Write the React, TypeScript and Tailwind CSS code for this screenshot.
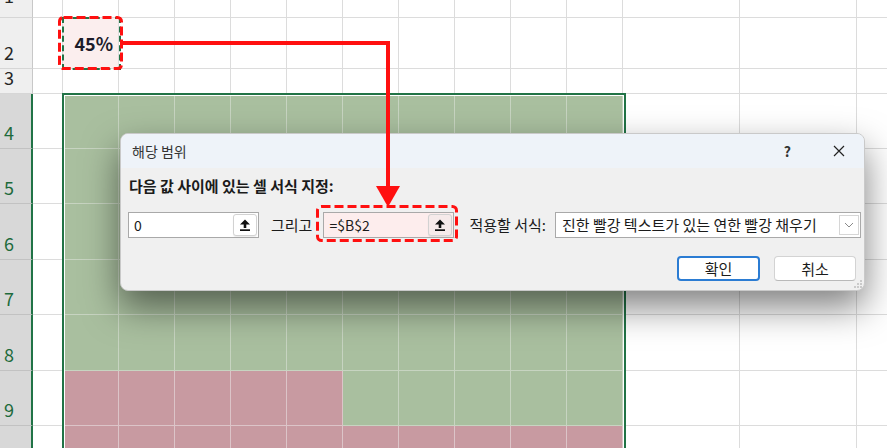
import React from 'react';

// 엑셀 시트 + "해당 범위" 조건부 서식 대화상자

const ROW_COUNT = 10;
const COL_COUNT = 15;

function cellClass(r: number, c: number) {
  if (c === 0) {
    return r >= 3
      ? 'bg-[#d8d8d8] border-r-2 border-r-[#217346] border-b border-b-[#c2c2c2] text-[#1e6b3c]'
      : 'bg-[#efefef] border-r border-r-[#c8c8c8] border-b border-b-[#d6d6d6] text-[#262626]';
  }
  const inRange = r >= 3 && c >= 2 && c <= 11;
  if (inRange) {
    const pink = r === 9 || (r === 8 && c <= 6);
    return pink
      ? 'bg-[#c89aa1] border-r border-b border-[#dcc4c8]'
      : 'bg-[#a9bf9f] border-r border-b border-[#c7d4c1]';
  }
  if (r === 1 && c === 2) return 'bg-[#fbeeee] border-r border-b border-[#dcdcdc]';
  return 'bg-white border-r border-b border-[#dcdcdc]';
}

function UploadIcon() {
  return (
    <svg width="14" height="14" viewBox="0 0 14 14">
      <polygon points="7,1.5 12,6.5 8.3,6.5 8.3,10 5.7,10 5.7,6.5 2,6.5" fill="#111" />
      <rect x="2" y="11.3" width="10" height="1.7" fill="#111" />
    </svg>
  );
}

// 빨간 점선 강조 박스
function DashedBox({ className, w, h }: { className: string; w: number; h: number }) {
  return (
    <svg className={`absolute ${className}`} width={w} height={h} viewBox={`0 0 ${w} ${h}`}>
      <rect
        x="1.5"
        y="1.5"
        width={w - 3}
        height={h - 3}
        rx="4"
        fill="none"
        stroke="#ff1010"
        strokeWidth="3"
        strokeDasharray="9 4"
      />
    </svg>
  );
}

function RefInput({ value, pink }: { value: string; pink?: boolean }) {
  return (
    <div
      className={`relative shrink-0 w-[131px] h-[26px] border border-[#a9a9a9] flex items-center pl-[5px] text-[14px] text-[#1b1b1b] ${
        pink ? 'bg-[#fdeded]' : 'bg-white'
      }`}
    >
      <span>{value}</span>
      <div
        className={`absolute right-[1px] top-[1px] w-[24px] h-[22px] rounded-[3px] border border-[#d2d2d2] flex items-center justify-center shadow-[0_1px_1px_rgba(0,0,0,0.08)] ${
          pink ? 'bg-[#f6eaea]' : 'bg-white'
        }`}
      >
        <UploadIcon />
      </div>
    </div>
  );
}

export default function App() {
  const cells = [];
  for (let r = 0; r < ROW_COUNT; r++) {
    for (let c = 0; c < COL_COUNT; c++) {
      const header = c === 0;
      cells.push(
        <div
          key={`${r}-${c}`}
          className={`${cellClass(r, c)} ${
            header
              ? `flex items-end pl-[4px] text-[18px] leading-none ${r === 0 ? 'pb-[13px] overflow-hidden' : 'pb-[7px]'}`
              : 'overflow-hidden'
          }`}
        >
          {header && r < 9 && r + 1}
          {r === 1 && c === 2 && (
            <div className="h-full flex items-center justify-end pr-[5px] text-[18px] font-bold text-[#1c1c2a]">
              45%
            </div>
          )}
        </div>
      );
    }
  }

  return (
    <div className="relative w-[887px] h-[448px] overflow-hidden bg-white font-['Noto_Sans_CJK_KR','Noto_Sans',sans-serif]">
      {/* Sheet */}
      <div className="grid grid-cols-[33px_30px_repeat(10,56px)_117px_117px_60px] grid-rows-[18px_51px_25px_55px_55px_56px_55px_56px_55px_55px]">
        {cells}
      </div>

      {/* B2 copy border */}
      <div className="absolute left-[62px] top-[17px] w-[59px] h-[53px] border-2 border-dashed border-[#217346]" />
      {/* Selection border */}
      <div className="absolute left-[62px] top-[93px] w-[564px] h-[400px] border-2 border-[#217346] shadow-[inset_0_0_0_1px_#ffffff]" />

      {/* Red annotation around B2 */}
      <DashedBox className="left-[58px] top-[16px]" w={65} h={54} />

      {/* Dialog */}
      <div className="absolute left-[120px] top-[133px] w-[745px] h-[158px] rounded-[8px] border border-[#c9c9c9] bg-[#f0f0f0] shadow-[0_16px_36px_rgba(0,0,0,0.5)] overflow-hidden flex flex-col text-[#1b1b1b] whitespace-nowrap">
        <div className="h-[34px] bg-[#eef3f9] flex items-center pl-[11px] pr-[19px]">
          <span className="text-[14px] text-[#333]">해당 범위</span>
          <div className="ml-auto flex items-center gap-[42px]">
            <span className="text-[14px] font-bold text-[#333]">?</span>
            <svg width="12" height="12" viewBox="0 0 12 12">
              <path d="M1 1 L11 11 M11 1 L1 11" stroke="#222" strokeWidth="1.2" />
            </svg>
          </div>
        </div>
        <div className="px-[7px] flex flex-col">
          <div className="mt-[9px] pl-[1px] text-[15px] font-bold leading-[18px]">다음 값 사이에 있는 셀 서식 지정:</div>
          <div className="mt-[17px] flex items-center">
            <RefInput value="0" />
            <span className="ml-[12px] shrink-0 text-[15px]">그리고</span>
            <div className="ml-[11px] shrink-0">
              <RefInput value="=$B$2" pink />
            </div>
            <span className="ml-[15px] shrink-0 text-[15px]">적용할 서식:</span>
            <div className="relative shrink-0 ml-[9px] w-[306px] h-[26px] bg-white border border-[#a9a9a9] flex items-center pl-[6px] text-[15px]">
              진한 빨강 텍스트가 있는 연한 빨강 채우기
              <div className="absolute right-[1px] top-[2px] w-[20px] h-[20px] border border-[#d6d6d6] bg-white flex items-center justify-center">
                <svg width="10" height="6" viewBox="0 0 10 6">
                  <path d="M1 1 L5 5 L9 1" fill="none" stroke="#8a8a8a" strokeWidth="1" />
                </svg>
              </div>
            </div>
          </div>
          <div className="mt-[18px] flex justify-end gap-[14px] pr-[1px]">
            <button className="w-[83px] h-[25px] rounded-[4px] border-2 border-[#2b7cd3] bg-white text-[15px] leading-none">확인</button>
            <button className="w-[82px] h-[25px] rounded-[4px] border border-[#d3d3d3] border-b-[#b9b9b9] bg-white text-[15px] leading-none">취소</button>
          </div>
        </div>
        {/* resize grip */}
        <svg className="absolute right-[2px] bottom-[2px]" width="8" height="8" viewBox="0 0 8 8">
          <circle cx="7" cy="1" r="0.8" fill="#9a9a9a" />
          <circle cx="7" cy="4" r="0.8" fill="#9a9a9a" />
          <circle cx="4" cy="4" r="0.8" fill="#9a9a9a" />
          <circle cx="7" cy="7" r="0.8" fill="#9a9a9a" />
          <circle cx="4" cy="7" r="0.8" fill="#9a9a9a" />
          <circle cx="1" cy="7" r="0.8" fill="#9a9a9a" />
        </svg>
      </div>

      {/* Red annotation around second input */}
      <DashedBox className="left-[316px] top-[205px]" w={142} h={37} />

      {/* Red arrow */}
      <div className="absolute left-[122px] top-[41px] w-[268px] h-[4px] bg-[#ff1010]" />
      <div className="absolute left-[386px] top-[41px] w-[4px] h-[147px] bg-[#ff1010]" />
      <svg className="absolute left-[376px] top-[186px]" width="24" height="21" viewBox="0 0 24 21">
        <polygon points="0,0 24,0 12,21" fill="#ff1010" />
      </svg>
    </div>
  );
}
